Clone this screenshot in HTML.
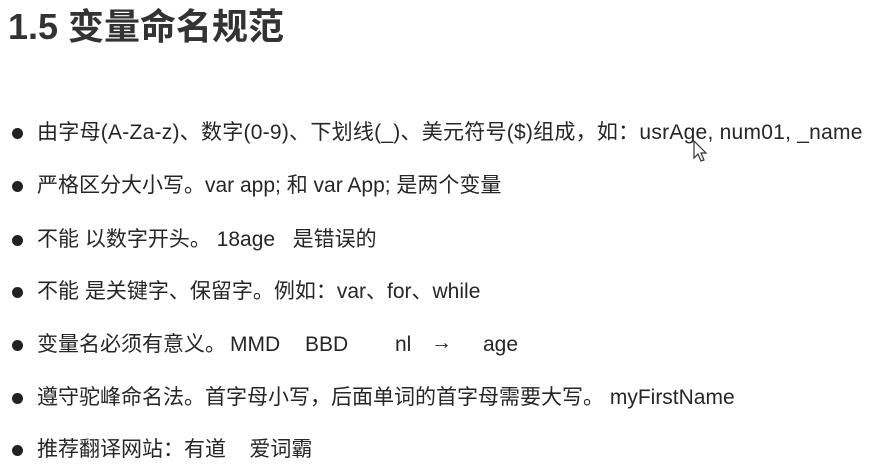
<!DOCTYPE html>
<html><head><meta charset="utf-8"><style>
body{margin:0;width:877px;height:470px;background:#fff;overflow:hidden;position:relative;font-family:"Liberation Sans","Noto Sans CJK SC",sans-serif;color:#262626}
.t{position:absolute;left:8px;top:2px;font-size:36px;font-weight:bold;color:#333;line-height:50px;white-space:nowrap}
.l{position:absolute;left:37px;font-size:21px;line-height:26px;white-space:nowrap}
.d{position:absolute;left:12px;width:11px;height:11px;border-radius:50%;background:#222}
.a{position:absolute;font-size:21px;line-height:26px;white-space:nowrap}
</style></head><body>
<div class="t">1.5 变量命名规范</div>
<div class="d" style="top:128px"></div><div class="l" style="top:120px;letter-spacing:0.25px">由字母(A-Za-z)、数字(0-9)、下划线(_)、美元符号($)组成，如：usrAge, num01, _name</div>
<div class="d" style="top:181px"></div><div class="l" style="top:173px">严格区分大小写。var app; 和 var App; 是两个变量</div>
<div class="d" style="top:235px"></div><div class="l" style="top:227px">不能 以数字开头。 18age&nbsp;&nbsp; 是错误的</div>
<div class="d" style="top:287px"></div><div class="l" style="top:279px">不能 是关键字、保留字。例如：var、for、while</div>
<div class="d" style="top:340px"></div><div class="l" style="top:332px">变量名必须有意义。</div>
<div class="a" style="left:230px;top:332px">MMD</div>
<div class="a" style="left:305px;top:332px">BBD</div>
<div class="a" style="left:395px;top:332px">nl</div>
<div class="a" style="left:431px;top:330px;font-weight:bold">→</div>
<div class="a" style="left:483px;top:332px">age</div>
<div class="d" style="top:393px"></div><div class="l" style="top:385px">遵守驼峰命名法。首字母小写，后面单词的首字母需要大写。 myFirstName</div>
<div class="d" style="top:445px"></div><div class="l" style="top:437px">推荐翻译网站：有道&nbsp;&nbsp;&nbsp; 爱词霸</div>
<svg style="position:absolute;left:693px;top:140px" width="16" height="24" viewBox="0 0 16 24"><path d="M1 1 L1 18 L5 14 L8 21 L11 20 L8 13 L13 13 Z" fill="#fff" stroke="#333" stroke-width="1.2"/></svg>
</body></html>
